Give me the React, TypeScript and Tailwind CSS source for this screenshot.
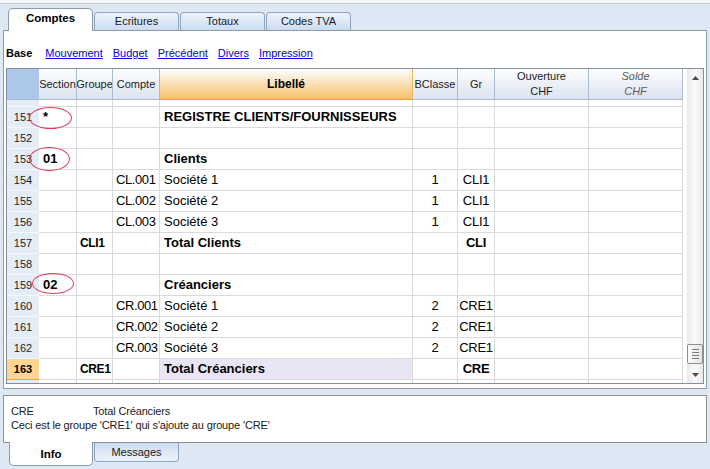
import React from "react"

type Row = {
  n: number
  section?: string
  groupe?: string
  compte?: string
  libelle?: string
  bclasse?: string
  gr?: string
  bold?: boolean
  ring?: { left: number; top: number; w: number; h: number }
  active?: boolean
}

const rows: Row[] = [
  { n: 151, section: "*", libelle: "REGISTRE CLIENTS/FOURNISSEURS", bold: true, ring: { left: -10, top: 0, w: 43, h: 22 } },
  { n: 152 },
  { n: 153, section: "01", libelle: "Clients", bold: true, ring: { left: -10, top: -2, w: 41, h: 24 } },
  { n: 154, compte: "CL.001", libelle: "Société 1", bclasse: "1", gr: "CLI1" },
  { n: 155, compte: "CL.002", libelle: "Société 2", bclasse: "1", gr: "CLI1" },
  { n: 156, compte: "CL.003", libelle: "Société 3", bclasse: "1", gr: "CLI1" },
  { n: 157, groupe: "CLI1", libelle: "Total Clients", gr: "CLI", bold: true },
  { n: 158 },
  { n: 159, section: "02", libelle: "Créanciers", bold: true, ring: { left: -7, top: -2, w: 42, h: 21 } },
  { n: 160, compte: "CR.001", libelle: "Société 1", bclasse: "2", gr: "CRE1" },
  { n: 161, compte: "CR.002", libelle: "Société 2", bclasse: "2", gr: "CRE1" },
  { n: 162, compte: "CR.003", libelle: "Société 3", bclasse: "2", gr: "CRE1" },
  { n: 163, groupe: "CRE1", libelle: "Total Créanciers", gr: "CRE", bold: true, active: true },
]

const cols = "grid grid-cols-[32px_38px_36px_47px_253px_45px_37px_94px_94px] w-[676px]"
const cell = "border-r border-b border-[#dadada] whitespace-nowrap overflow-hidden"

function Tab({ label, active }: { label: string; active?: boolean }) {
  if (active) {
    return (
      <div className="relative z-10 -mb-px flex h-[23px] w-[85px] items-center justify-center rounded-t-[5px] border border-b-0 border-[#8d9aa9] bg-white pb-[2px] text-[11.5px] font-bold text-black">
        {label}
      </div>
    )
  }
  return (
    <div className="flex h-[18px] w-[85px] items-center justify-center rounded-t-[4px] border border-b-0 border-[#8fa5c1] bg-gradient-to-b from-[#edf3fb] to-[#ccdcf2] text-[11px] text-[#1a1a1a]">
      {label}
    </div>
  )
}

function HeaderCell({ children, className = "" }: { children?: React.ReactNode; className?: string }) {
  return (
    <div className={"flex flex-col items-center justify-center border-r border-b border-[#a9bbd3] bg-gradient-to-b from-[#fdfeff] to-[#dbe3ef] text-[11px] leading-[15px] text-[#1c1c1c] whitespace-nowrap overflow-hidden " + className}>
      {children}
    </div>
  )
}

function ScrollBar() {
  return (
    <div className="flex w-[16px] flex-col bg-gradient-to-r from-[#ebe8ec] via-[#faf9fa] to-[#ebe8ec]">
      <div className="flex h-[18px] items-center justify-center">
        <svg width="7" height="4" viewBox="0 0 7 4">
          <path d="M0 4 L3.5 0 L7 4 Z" fill="#4a4a4a" />
        </svg>
      </div>
      <div className="flex-1" />
      <div className="flex h-[20px] flex-col items-center justify-center gap-[2px] rounded-[2px] border border-[#8e8e8e] bg-gradient-to-r from-[#fbfbfb] to-[#e4e4e4]">
        <div className="h-px w-[7px] bg-[#7a7a7a]" />
        <div className="h-px w-[7px] bg-[#7a7a7a]" />
        <div className="h-px w-[7px] bg-[#7a7a7a]" />
        <div className="h-px w-[7px] bg-[#7a7a7a]" />
      </div>
      <div className="h-[3px]" />
      <div className="flex h-[16px] items-center justify-center">
        <svg width="7" height="4" viewBox="0 0 7 4">
          <path d="M0 0 L3.5 4 L7 0 Z" fill="#4a4a4a" />
        </svg>
      </div>
    </div>
  )
}

function DataRow({ r }: { r: Row }) {
  const b = r.bold ? "font-bold" : ""
  return (
    <div className={cols + " h-[21px] text-[13px] leading-[20px] text-black"}>
      <div
        className={
          r.active
            ? "flex items-center justify-center border-b border-[#f0a23a] bg-[#fdd692] text-[11px] font-bold"
            : "flex items-center justify-center border-b border-[#f4f7fb] bg-[#e4ecf6] text-[11px] text-[#1e1e1e]"
        }
      >
        {r.n}
      </div>
      <div className={cell + " relative overflow-visible px-1 " + b}>
        {r.section}
        {r.ring && (
          <div
            className="pointer-events-none absolute z-10 rounded-[50%] border border-[#e43a5c]"
            style={{ left: r.ring.left, top: r.ring.top, width: r.ring.w, height: r.ring.h }}
          />
        )}
      </div>
      <div className={cell + " pl-[3px] text-[12px] tracking-[-0.4px] " + b}>{r.groupe}</div>
      <div className={cell + " pl-[3px] tracking-[-0.4px]"}>{r.compte}</div>
      <div className={cell + " px-1 " + b + (r.active ? " bg-[#e8e6f5]" : "")}>{r.libelle}</div>
      <div className={cell + " text-center"}>{r.bclasse}</div>
      <div className={cell + " text-center tracking-[-0.3px] " + b}>{r.gr}</div>
      <div className={cell} />
      <div className={cell} />
    </div>
  )
}

function Filler({ h }: { h: string }) {
  return (
    <div className={cols + " " + h}>
      <div className="border-b border-[#f4f7fb] bg-[#e4ecf6]" />
      <div className={cell} />
      <div className={cell} />
      <div className={cell} />
      <div className={cell} />
      <div className={cell} />
      <div className={cell} />
      <div className={cell} />
      <div className={cell} />
    </div>
  )
}

export default function App() {
  return (
    <div className="h-[469px] w-[710px] overflow-hidden bg-[#dee8f4] font-['Liberation_Sans',Arial,sans-serif]">
      <div className="h-[4px] border-b border-[#c3cbd6] bg-[#f5f6f8]" />

      <div className="flex h-[26px] items-end gap-px pl-[8px]">
        <Tab label="Comptes" active />
        <Tab label="Ecritures" />
        <Tab label="Totaux" />
        <Tab label="Codes TVA" />
      </div>

      <div className="ml-[3px] h-[359px] w-[704px] border border-[#8e9aa8] bg-white">
        <div className="flex h-[37px] items-start pl-[2px] pt-[15px] text-[11px] leading-[14px]">
          <span className="mr-[13px] font-bold text-black">Base</span>
          <div className="flex gap-[10px] text-[#0000ee] underline">
            <span>Mouvement</span>
            <span>Budget</span>
            <span>Précédent</span>
            <span>Divers</span>
            <span>Impression</span>
          </div>
        </div>

        <div className="ml-[2px] flex h-[316px] w-[698px] overflow-hidden border border-[#848f9e]">
          <div className="w-[680px] overflow-hidden">
            <div className={cols + " h-[31px]"}>
              <div className="border-b border-[#a9bbd3] bg-[#adc7eb]" />
              <HeaderCell>Section</HeaderCell>
              <HeaderCell>Groupe</HeaderCell>
              <HeaderCell>Compte</HeaderCell>
              <HeaderCell className="border-r-[#f2b458] border-b-[#eea13a] from-[#fde2aa] to-[#f6c062] text-[12px] font-bold text-black">
                Libellé
              </HeaderCell>
              <HeaderCell>BClasse</HeaderCell>
              <HeaderCell>Gr</HeaderCell>
              <HeaderCell>
                <span>Ouverture</span>
                <span>CHF</span>
              </HeaderCell>
              <HeaderCell className="italic text-[#5a5a5a]">
                <span>Solde</span>
                <span>CHF</span>
              </HeaderCell>
            </div>
            <Filler h="h-[7px]" />
            {rows.map((r) => (
              <DataRow key={r.n} r={r} />
            ))}
            <Filler h="h-[10px]" />
          </div>
          <ScrollBar />
        </div>
      </div>

      <div className="ml-[3px] mt-[6px] h-[48px] w-[704px] border border-[#8f8f8f] bg-white px-[7px] pt-[8px] text-[11px] leading-[14px] tracking-[-0.15px] text-[#1a1a1a]">
        <div className="flex">
          <span className="w-[82px]">CRE</span>
          <span>Total Créanciers</span>
        </div>
        <div>Ceci est le groupe 'CRE1' qui s'ajoute au groupe 'CRE'</div>
      </div>

      <div className="flex items-start gap-px pl-[9px]">
        <div className="relative z-10 -mt-px flex h-[24px] w-[84px] items-center justify-center rounded-b-[5px] border border-t-0 border-[#8d9aa9] bg-white pt-[3px] text-[11.5px] font-bold text-black">
          Info
        </div>
        <div className="flex h-[19px] w-[85px] items-center justify-center rounded-b-[4px] border border-t-0 border-[#8fa5c1] bg-gradient-to-b from-[#ccdcf2] to-[#edf3fb] text-[11px] text-[#1a1a1a]">
          Messages
        </div>
      </div>
    </div>
  )
}
